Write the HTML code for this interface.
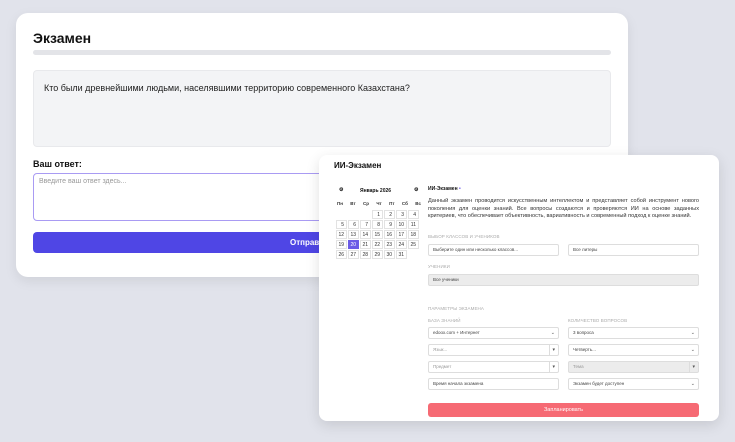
<!DOCTYPE html><html><head><meta charset="utf-8"><style>
*{box-sizing:border-box;margin:0;padding:0}
body{width:735px;height:442px;background:#e1e3eb;font-family:"Liberation Sans",sans-serif;position:relative;overflow:hidden;color:#111}
.a{position:absolute}
.c1{left:16px;top:13px;width:612px;height:264px;background:#fff;border-radius:12px;box-shadow:0 4px 12px rgba(0,0,0,.08)}
.c2{left:319px;top:155px;width:400px;height:266px;background:#fff;border-radius:8px;box-shadow:0 4px 14px rgba(0,0,0,.12)}
.inp{position:absolute;height:12px;border:1px solid #ddd;border-radius:2px;font-size:4.5px;color:#444;padding-left:4px;line-height:10px;background:#fff}
.lab{position:absolute;font-size:4.5px;color:#aaa;letter-spacing:.1px}
.cell{position:absolute;width:11px;height:9px;border:1px solid #e2e2e2;font-size:5px;text-align:right;padding-right:2px;line-height:8px;color:#333}
.dd{position:absolute;right:3px;top:0;font-size:5px;color:#555}
</style></head><body>
<div class="a c1"></div>
<div class="a" style="left:33px;top:30px;font-size:14px;font-weight:bold">Экзамен</div>
<div class="a" style="left:33px;top:50px;width:578px;height:5px;background:#e3e4e8;border-radius:3px"></div>
<div class="a" style="left:33px;top:70px;width:578px;height:77px;background:#f3f4f6;border:1px solid #e8e9ec;border-radius:4px"></div>
<div class="a" style="left:44px;top:83px;font-size:9px;color:#222">Кто были древнейшими людьми, населявшими территорию современного Казахстана?</div>
<div class="a" style="left:33px;top:159px;font-size:9px;font-weight:bold">Ваш ответ:</div>
<div class="a" style="left:33px;top:173px;width:300px;height:48px;border:1px solid #a99bf3;border-radius:4px"></div>
<div class="a" style="left:39px;top:178px;font-size:7px;color:#999">Введите ваш ответ здесь...</div>
<div class="a" style="left:33px;top:232px;width:300px;height:21px;background:#4f46e5;border-radius:4px"></div>
<div class="a" style="left:290px;top:238px;font-size:8px;font-weight:bold;color:#fff">Отправ</div>

<div class="a c2"></div>
<div class="a" style="left:334px;top:161px;font-size:8px;font-weight:bold">ИИ-Экзамен</div>
<div class="a" style="left:339px;top:187px;font-size:5px;font-weight:bold">&#x2699;</div>
<div class="a" style="left:360px;top:188px;font-size:5px;font-weight:bold">Январь 2026</div>
<div class="a" style="left:414px;top:187px;font-size:5px;font-weight:bold">&#x2699;</div>
<div class="a" style="left:337px;top:201px;width:84px;font-size:4.5px;font-weight:bold;display:flex;justify-content:space-between;color:#333"><span>Пн</span><span>Вт</span><span>Ср</span><span>Чт</span><span>Пт</span><span>Сб</span><span>Вс</span></div>
<div id="cal"></div>
<div class="a" style="left:428px;top:186px;font-size:5px;font-weight:bold">ИИ-Экзамен <span style="color:#6b5be6">•</span></div>
<div class="a" style="left:428px;top:198px;width:271px;font-size:5.6px;line-height:7.5px;color:#333;text-align:justify">Данный экзамен проводится искусственным интеллектом и представляет собой инструмент нового поколения для оценки знаний. Все вопросы создаются и проверяются ИИ на основе заданных критериев, что обеспечивает объективность, вариативность и современный подход к оценке знаний.</div>
<div class="lab" style="left:428px;top:234px">ВЫБОР КЛАССОВ И УЧЕНИКОВ</div>
<div class="inp" style="left:428px;top:244px;width:131px">Выберите один или несколько классов...</div>
<div class="inp" style="left:568px;top:244px;width:131px">Все литеры</div>
<div class="lab" style="left:428px;top:264px">УЧЕНИКИ</div>
<div class="inp" style="left:428px;top:274px;width:271px;background:#ececec">Все ученики</div>
<div class="lab" style="left:428px;top:306px">ПАРАМЕТРЫ ЭКЗАМЕНА</div>
<div class="lab" style="left:428px;top:318px">БАЗА ЗНАНИЙ</div>
<div class="lab" style="left:568px;top:318px">КОЛИЧЕСТВО ВОПРОСОВ</div>
<div class="inp" style="left:428px;top:327px;width:131px">edoox.com + Интернет<span class="dd">⌄</span></div>
<div class="inp" style="left:568px;top:327px;width:131px">3 вопроса<span class="dd">⌄</span></div>
<div class="inp" style="left:428px;top:344px;width:131px;color:#999">Язык...<span class="dd" style="border-left:1px solid #ddd;padding-left:2px">▾</span></div>
<div class="inp" style="left:568px;top:344px;width:131px">Четверть...<span class="dd">⌄</span></div>
<div class="inp" style="left:428px;top:361px;width:131px;color:#999">Предмет<span class="dd" style="border-left:1px solid #ddd;padding-left:2px">▾</span></div>
<div class="inp" style="left:568px;top:361px;width:131px;background:#ececec;color:#999">Тема<span class="dd" style="border-left:1px solid #ddd;padding-left:2px">▾</span></div>
<div class="inp" style="left:428px;top:378px;width:131px">Время начала экзамена</div>
<div class="inp" style="left:568px;top:378px;width:131px">Экзамен будет доступен<span class="dd">⌄</span></div>
<div class="a" style="left:428px;top:403px;width:271px;height:14px;background:#f66a74;border-radius:3px;color:#fff;font-size:5.5px;text-align:center;line-height:14px">Запланировать</div>
<script>
var h='';
for(var r=0;r<5;r++)for(var c=0;c<7;c++){var i=r*7+c-3;if(i<0)continue;var n=i+1;if(n>31)break;
var x=336+c*12,y=210+r*10;var s=n==20?'background:#6b5be6;color:#fff;border-color:#6b5be6':'';
h+='<div class="cell" style="left:'+x+'px;top:'+y+'px;'+s+'">'+n+'</div>';}
document.getElementById('cal').innerHTML=h;
</script>
</body></html>
